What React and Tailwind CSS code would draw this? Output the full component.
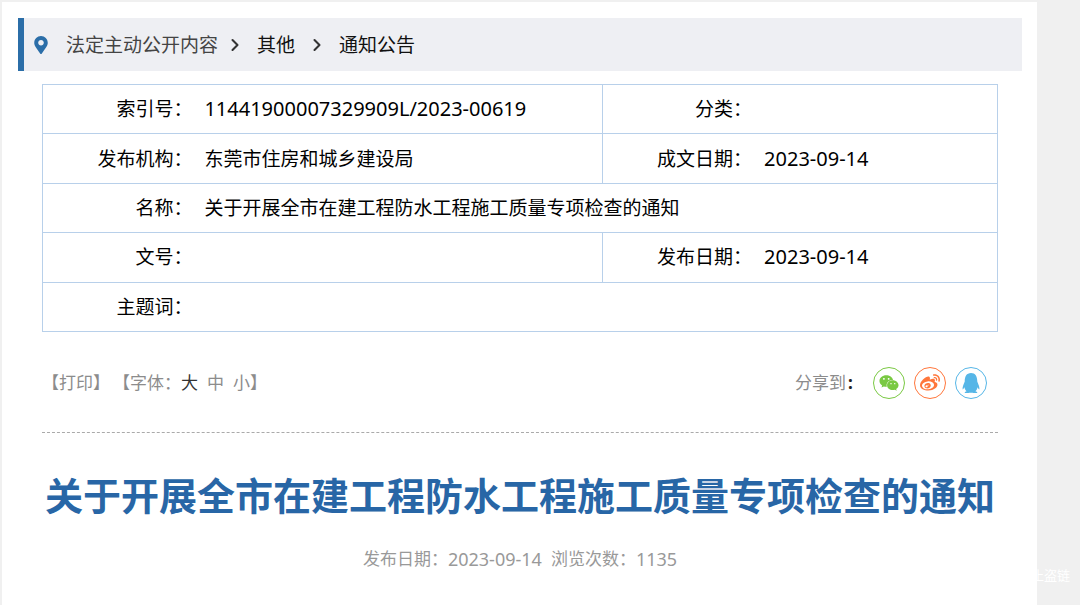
import { useState } from 'react';
import { ChevronRight } from 'lucide-react';
import { FaWeixin, FaWeibo, FaQq, FaMapMarkerAlt } from 'react-icons/fa';

const fontSizes = ['大', '中', '小'];

const shareLinks = [
  { name: '微信', icon: FaWeixin, color: 'border-[#7ac943] text-[#7ac943]' },
  { name: '微博', icon: FaWeibo, color: 'border-[#ff763b] text-[#ff763b]' },
  { name: 'QQ', icon: FaQq, color: 'border-[#56b6e7] text-[#56b6e7]' },
];

const Breadcrumb = () => (
  <nav className="flex items-center h-[53px] pl-[10px] border-l-[6px] border-[#2b6ea8] bg-[#eeeff3] text-[19px]">
    <FaMapMarkerAlt className="w-[14px] h-[18px] text-[#2b6ea8] shrink-0" />
    <a href="#public" className="ml-[18px] pt-[2px] text-[#444]">法定主动公开内容</a>
    <ChevronRight strokeWidth={2.5} className="w-5 h-5 mx-[7px] mr-[12px] text-[#333]" />
    <a href="#other" className="pt-[2px] text-[#111]">其他</a>
    <ChevronRight strokeWidth={2.5} className="w-5 h-5 mx-[12px] text-[#333]" />
    <a href="#notice" className="pt-[2px] text-[#111]">通知公告</a>
  </nav>
);

const Label = ({ children }) => (
  <th scope="row" className="h-[49px] p-0 border-y border-[#b8d0ea] font-normal text-right">
    {children}：
  </th>
);

const Value = ({ children, colSpan, numeric }) => (
  <td
    colSpan={colSpan}
    className={`h-[49px] py-0 pl-[12px] border-y border-r border-[#b8d0ea] ${numeric ? 'text-[20px]' : ''}`}
  >
    {children}
  </td>
);

const InfoTable = () => (
  <table className="w-full h-[248px] table-fixed border-collapse border border-[#b8d0ea] text-[19px] leading-6 text-black">
    <colgroup>
      <col className="w-[15.7%]" />
      <col />
      <col className="w-[15.7%]" />
      <col className="w-[25.7%]" />
    </colgroup>
    <tbody>
      <tr>
        <Label>索引号</Label>
        <Value numeric>11441900007329909L/2023-00619</Value>
        <Label>分类</Label>
        <Value />
      </tr>
      <tr>
        <Label>发布机构</Label>
        <Value>东莞市住房和城乡建设局</Value>
        <Label>成文日期</Label>
        <Value numeric>2023-09-14</Value>
      </tr>
      <tr>
        <Label>名称</Label>
        <Value colSpan={3}>关于开展全市在建工程防水工程施工质量专项检查的通知</Value>
      </tr>
      <tr>
        <Label>文号</Label>
        <Value />
        <Label>发布日期</Label>
        <Value numeric>2023-09-14</Value>
      </tr>
      <tr>
        <Label>主题词</Label>
        <Value colSpan={3} />
      </tr>
    </tbody>
  </table>
);

const Toolbar = () => {
  const [size, setSize] = useState('大');

  return (
    <div className="flex items-center justify-between pr-[11px] text-[17px] text-[#8c8c8c]">
      <div className="flex items-center">
        <span>【<button type="button" onClick={() => window.print()}>打印</button>】</span>
        <span className="ml-[3px]">【字体：</span>
        <div className="flex gap-[9px]">
          {fontSizes.map((item) => (
            <button
              key={item}
              type="button"
              onClick={() => setSize(item)}
              className={size === item ? 'text-[#333]' : ''}
            >
              {item}
            </button>
          ))}
        </div>
        <span>】</span>
      </div>

      <div className="flex items-center">
        <span>分享到</span>
        <span className="w-[27px] pl-[2px] font-bold text-[#222]">:</span>
        <div className="flex gap-[9px]">
          {shareLinks.map(({ name, icon: Icon, color }) => (
            <a
              key={name}
              href="#share"
              aria-label={name}
              className={`w-8 h-8 rounded-full border flex items-center justify-center ${color}`}
            >
              <Icon className="w-5 h-5" />
            </a>
          ))}
        </div>
      </div>
    </div>
  );
};

export default function App() {
  return (
    <div className="relative min-h-screen flex bg-[#f0f0f0] pt-[2px] pl-[2px] pr-[43px] font-['Noto_Sans','Noto_Sans_CJK_SC',sans-serif]">
      <main className="flex-1 bg-white pl-4 pt-4 pr-[15px]">
        <Breadcrumb />

        <div className="px-6 pt-[13px]">
          <InfoTable />

          <div className="pt-[35px] pb-[33px] border-b border-dashed border-[#aaa]">
            <Toolbar />
          </div>

          <h1 className="mt-[34px] text-center text-[38px] leading-[56px] font-bold text-[#2866a6]">
            关于开展全市在建工程防水工程施工质量专项检查的通知
          </h1>

          <p className="mt-[22px] flex items-center justify-center text-[17px] text-[#999]">
            <span>发布日期：</span>
            <span className="text-lg">2023-09-14</span>
            <span className="ml-[9px]">浏览次数：</span>
            <span className="text-lg">1135</span>
          </p>
        </div>
      </main>

      {/* Watermark */}
      <span className="absolute right-[10px] bottom-5 text-[13px] text-white">止盗链</span>
    </div>
  );
}
